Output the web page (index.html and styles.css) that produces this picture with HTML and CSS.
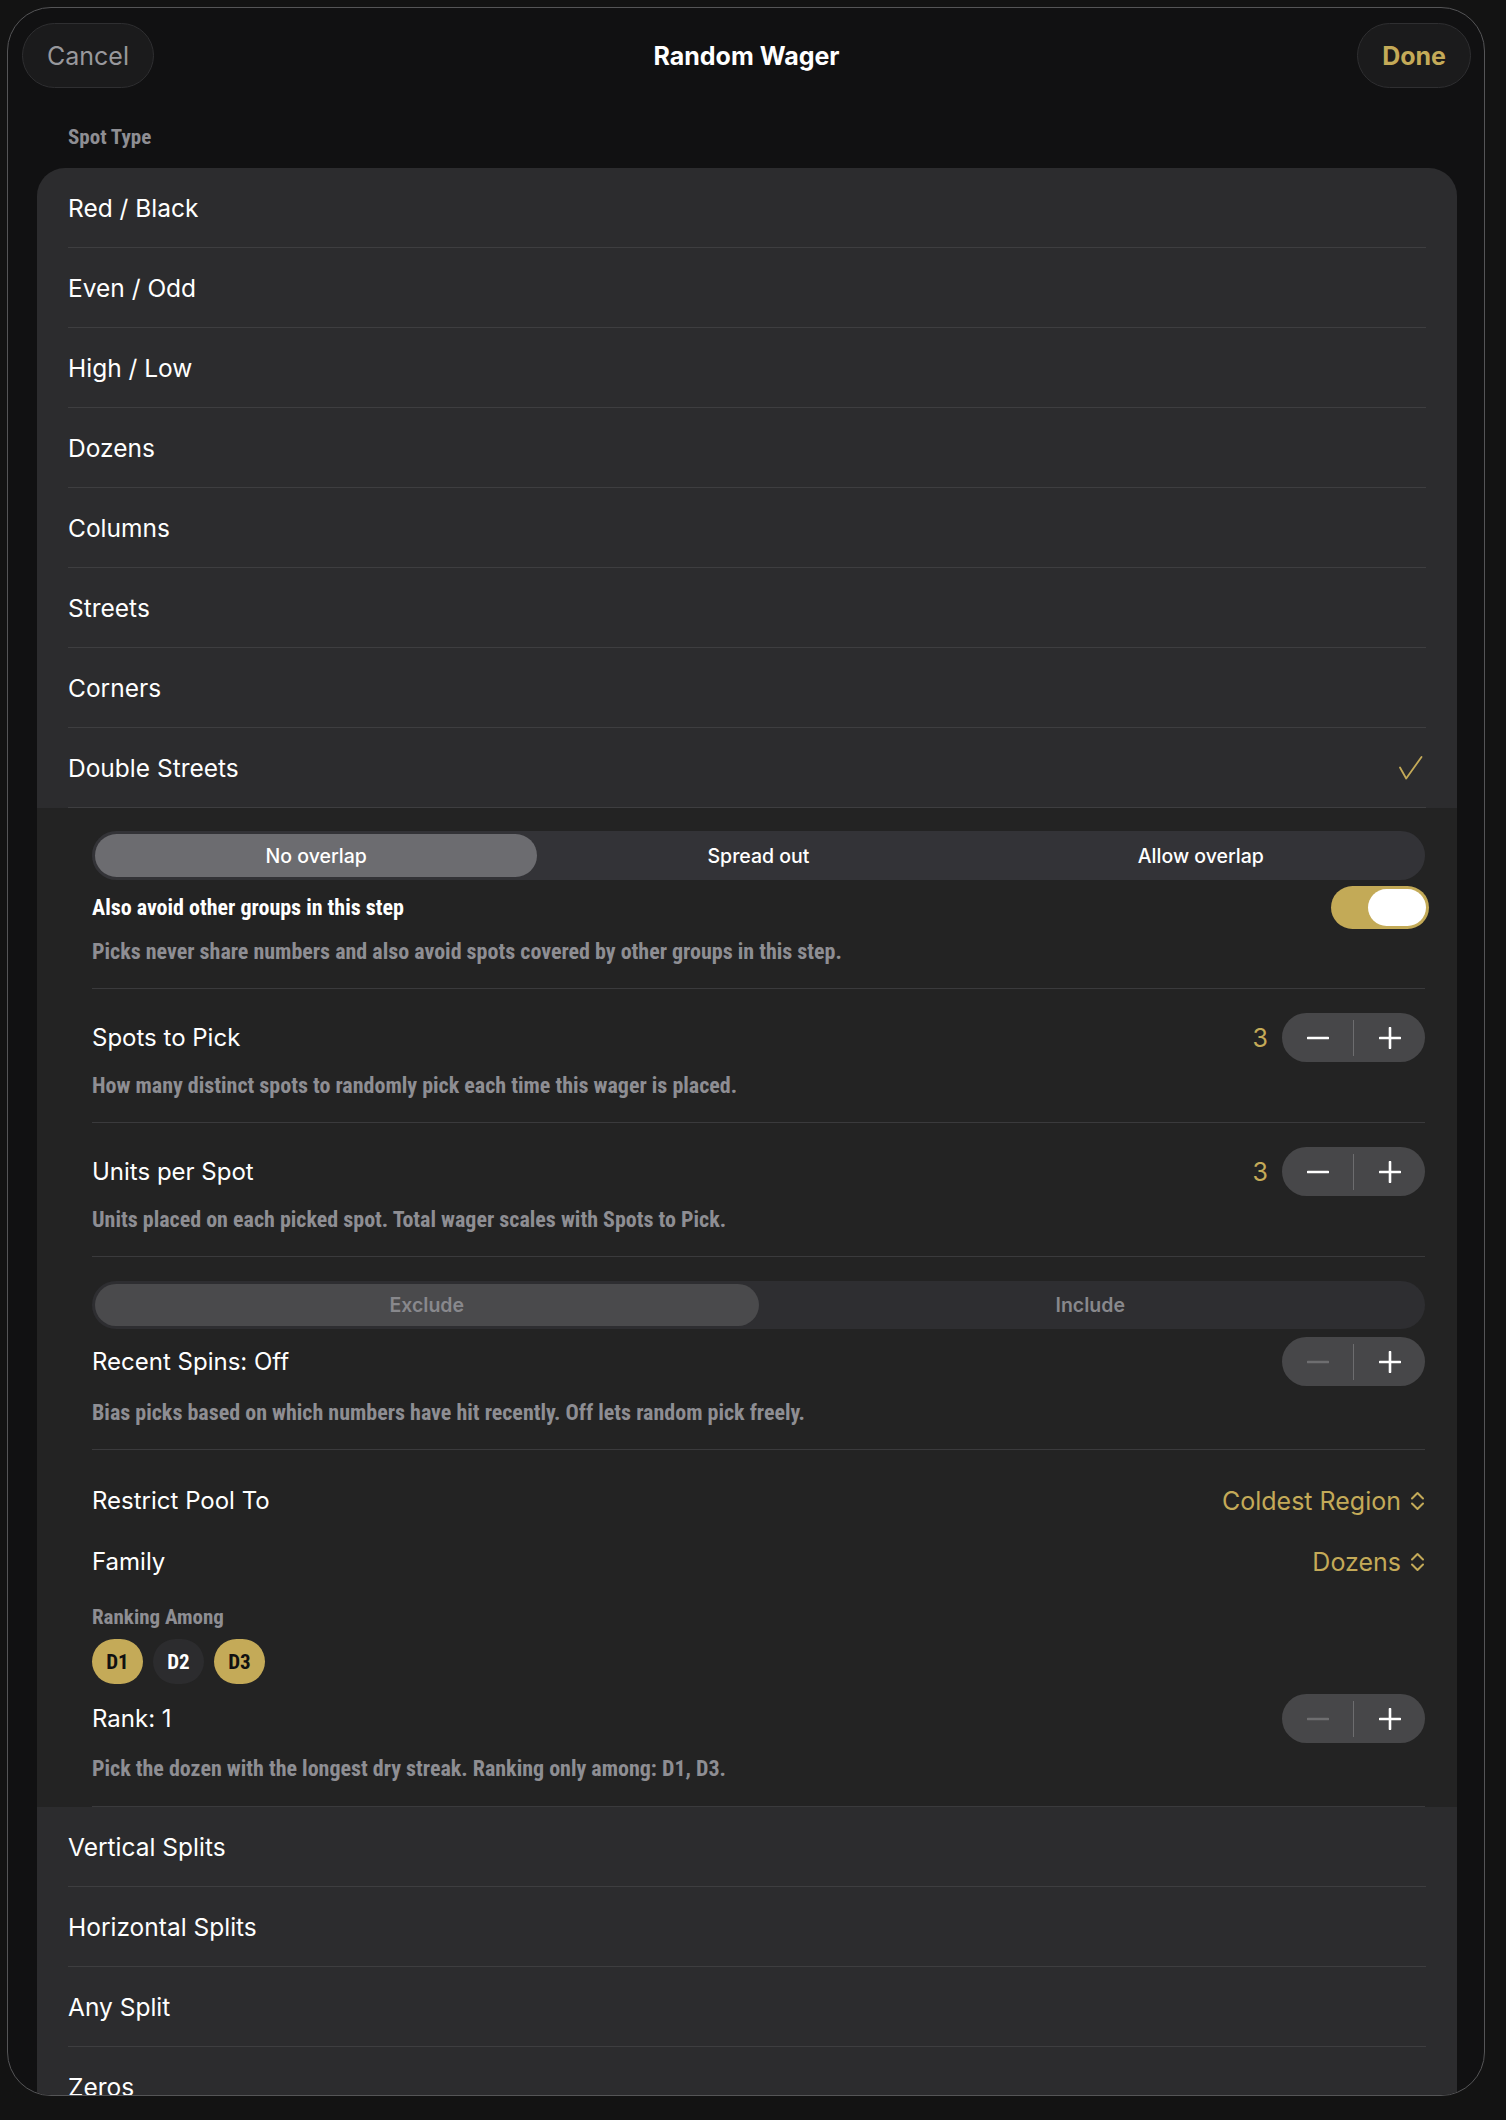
FILE: index.html
```html
<!DOCTYPE html>
<html lang="en">
<head>
  <meta charset="UTF-8">
  <title>Random Wager</title>
  <link rel="stylesheet" href="styles.css">
</head>
<body>
<main class="sheet">
  <header class="sheet-header">
    <button class="pill-btn cancel">Cancel</button>
    <h1 class="title">Random Wager</h1>
    <button class="pill-btn done">Done</button>
  </header>

  <p class="section-label cond">Spot Type</p>

  <section class="card">
    <div class="row">Red / Black</div>
    <div class="row">Even / Odd</div>
    <div class="row">High / Low</div>
    <div class="row">Dozens</div>
    <div class="row">Columns</div>
    <div class="row">Streets</div>
    <div class="row">Corners</div>
    <div class="row">
      <span>Double Streets</span>
      <svg class="check" width="24" height="24" viewBox="0 0 24 24"><path d="M1 11.5 L7.2 22.5 L22.5 1" fill="none" stroke="#c4aa58" stroke-width="1.8" stroke-linecap="round" stroke-linejoin="round"/></svg>
    </div>

    <div class="expanded">
      <div class="block block-first">
        <div class="segmented">
          <span class="seg active">No overlap</span>
          <span class="seg">Spread out</span>
          <span class="seg">Allow overlap</span>
        </div>
        <div class="toggle-row">
          <span class="strong cond">Also avoid other groups in this step</span>
          <span class="toggle"><span class="knob"></span></span>
        </div>
        <p class="desc cond">Picks never share numbers and also avoid spots covered by other groups in this step.</p>
      </div>

      <div class="block">
        <div class="opt-row">
          <span class="opt-label">Spots to Pick</span>
          <div class="stepper-wrap">
            <span class="value">3</span>
            <div class="stepper">
              <span class="step"><svg width="22" height="22" viewBox="0 0 22 22"><path d="M1 11h20" stroke="#fff" stroke-width="2.6" stroke-linecap="round"/></svg></span>
              <span class="divider"></span>
              <span class="step"><svg width="22" height="22" viewBox="0 0 22 22"><path d="M1 11h20M11 1v20" stroke="#fff" stroke-width="2.6" stroke-linecap="round"/></svg></span>
            </div>
          </div>
        </div>
        <p class="desc cond">How many distinct spots to randomly pick each time this wager is placed.</p>
      </div>

      <div class="block">
        <div class="opt-row">
          <span class="opt-label">Units per Spot</span>
          <div class="stepper-wrap">
            <span class="value">3</span>
            <div class="stepper">
              <span class="step"><svg width="22" height="22" viewBox="0 0 22 22"><path d="M1 11h20" stroke="#fff" stroke-width="2.6" stroke-linecap="round"/></svg></span>
              <span class="divider"></span>
              <span class="step"><svg width="22" height="22" viewBox="0 0 22 22"><path d="M1 11h20M11 1v20" stroke="#fff" stroke-width="2.6" stroke-linecap="round"/></svg></span>
            </div>
          </div>
        </div>
        <p class="desc cond">Units placed on each picked spot. Total wager scales with Spots to Pick.</p>
      </div>

      <div class="block">
        <div class="segmented dim">
          <span class="seg active">Exclude</span>
          <span class="seg">Include</span>
        </div>
        <div class="opt-row tight">
          <span class="opt-label">Recent Spins: Off</span>
          <div class="stepper">
            <span class="step"><svg width="22" height="22" viewBox="0 0 22 22"><path d="M1 11h20" stroke="#6e6e70" stroke-width="2.6" stroke-linecap="round"/></svg></span>
            <span class="divider"></span>
            <span class="step"><svg width="22" height="22" viewBox="0 0 22 22"><path d="M1 11h20M11 1v20" stroke="#fff" stroke-width="2.6" stroke-linecap="round"/></svg></span>
          </div>
        </div>
        <p class="desc cond loose">Bias picks based on which numbers have hit recently. Off lets random pick freely.</p>
      </div>

      <div class="block block-pool">
        <div class="opt-row">
          <span class="opt-label">Restrict Pool To</span>
          <span class="picker">Coldest Region
            <svg width="15" height="20" viewBox="0 0 15 20"><path d="M2 7.5 L7.5 2 L13 7.5 M2 12.5 L7.5 18 L13 12.5" fill="none" stroke="#c4aa58" stroke-width="2" stroke-linecap="round" stroke-linejoin="round"/></svg>
          </span>
        </div>
        <div class="opt-row family">
          <span class="opt-label">Family</span>
          <span class="picker">Dozens
            <svg width="15" height="20" viewBox="0 0 15 20"><path d="M2 7.5 L7.5 2 L13 7.5 M2 12.5 L7.5 18 L13 12.5" fill="none" stroke="#c4aa58" stroke-width="2" stroke-linecap="round" stroke-linejoin="round"/></svg>
          </span>
        </div>
        <p class="sub-label cond">Ranking Among</p>
        <div class="chips">
          <span class="chip on cond">D1</span>
          <span class="chip cond">D2</span>
          <span class="chip on cond">D3</span>
        </div>
        <div class="opt-row rank">
          <span class="opt-label">Rank: 1</span>
          <div class="stepper">
            <span class="step"><svg width="22" height="22" viewBox="0 0 22 22"><path d="M1 11h20" stroke="#6e6e70" stroke-width="2.6" stroke-linecap="round"/></svg></span>
            <span class="divider"></span>
            <span class="step"><svg width="22" height="22" viewBox="0 0 22 22"><path d="M1 11h20M11 1v20" stroke="#fff" stroke-width="2.6" stroke-linecap="round"/></svg></span>
          </div>
        </div>
        <p class="desc cond rank-desc">Pick the dozen with the longest dry streak. Ranking only among: D1, D3.</p>
      </div>
    </div>

    <div class="row">Vertical Splits</div>
    <div class="row">Horizontal Splits</div>
    <div class="row">Any Split</div>
    <div class="row">Zeros</div>
  </section>
</main>
</body>
</html>
```

FILE: styles.css
```css
* {
  margin: 0;
  padding: 0;
  box-sizing: border-box;
}

body {
  background: #131313;
  font-family: Inter, "Liberation Sans", sans-serif;
  color: #fff;
  height: 2120px;
  overflow: hidden;
}

.cond {
  font-family: "Roboto Condensed", "Liberation Sans Narrow", "DejaVu Sans Condensed", Roboto, sans-serif;
  font-stretch: condensed;
  font-weight: 700;
}

.sheet {
  margin: 7px 21px 0 7px;
  height: 2089px;
  background: #111112;
  border: 1px solid #555557;
  border-radius: 44px;
  overflow: hidden;
}

/* header */
.sheet-header {
  display: grid;
  grid-template-columns: 1fr auto 1fr;
  align-items: center;
  padding: 15px 13px 0 14px;
}

.pill-btn {
  height: 65px;
  padding: 0 24px;
  border-radius: 33px;
  background: #1b1b1c;
  border: 1px solid #2f2f31;
  font-family: Inter, "Liberation Sans", sans-serif;
  font-size: 25px;
}

.cancel {
  justify-self: start;
  color: #98989c;
}

.done {
  justify-self: end;
  color: #c4aa58;
  font-weight: 700;
}

.title {
  font-size: 25px;
  font-weight: 700;
}

.section-label {
  margin: 37px 0 0 60px;
  font-size: 21px;
  line-height: 24px;
  color: #8e8e93;
}

/* list card */
.card {
  margin: 19px 27px 0 29px;
  background: #2c2c2e;
  border-radius: 28px 28px 0 0;
}

.row {
  margin: 0 31px;
  height: 80px;
  border-bottom: 1px solid #3e3e40;
  display: flex;
  align-items: center;
  justify-content: space-between;
  font-size: 24.5px;
}

.check {
  margin-right: 3px;
}

/* expanded options */
.expanded {
  background: #232323;
  padding: 0 32px 0 55px;
}

.block {
  padding: 24px 0;
  border-bottom: 1px solid #3a3a3c;
}

.block-first {
  padding-top: 23px;
}

.segmented {
  display: flex;
  height: 49px;
  padding: 3px;
  background: #333337;
  border-radius: 25px;
}

.seg {
  flex: 1;
  display: flex;
  align-items: center;
  justify-content: center;
  border-radius: 22px;
  font-size: 19.5px;
  font-weight: 500;
}

.seg.active {
  background: #6c6c70;
}

.segmented.dim {
  height: 48px;
  background: #2e2e31;
}

.segmented.dim .seg {
  color: #88888c;
  font-weight: 600;
}

.segmented.dim .seg.active {
  background: #4a4a4c;
}

.toggle-row {
  margin-top: 6px;
  height: 43px;
  display: flex;
  align-items: center;
  justify-content: space-between;
}

.strong {
  font-size: 22px;
}

.toggle {
  width: 98px;
  height: 43px;
  margin-right: -4px;
  padding: 3px;
  border-radius: 22px;
  background: #c3aa57;
  display: flex;
  justify-content: flex-end;
}

.knob {
  width: 58px;
  height: 37px;
  border-radius: 19px;
  background: #fff;
}

.desc {
  margin-top: 11px;
  font-size: 22px;
  line-height: 24px;
  color: #8e8e93;
}

.opt-row + .desc {
  margin-top: 12px;
}

.opt-row + .desc.loose {
  margin-top: 15px;
}

.opt-row + .desc.rank-desc {
  margin-top: 14px;
}

.opt-row {
  height: 49px;
  display: flex;
  align-items: center;
  justify-content: space-between;
}

.opt-row.tight {
  margin-top: 8px;
}

.opt-label {
  font-size: 24px;
}

.stepper-wrap {
  display: flex;
  align-items: center;
}

.value {
  margin-right: 14px;
  font-size: 25px;
  color: #c4aa58;
}

.stepper {
  width: 143px;
  height: 49px;
  border-radius: 25px;
  background: #474749;
  display: flex;
  align-items: center;
}

.step {
  flex: 1;
  height: 100%;
  display: flex;
  align-items: center;
  justify-content: center;
}

.divider {
  width: 1px;
  height: 36px;
  background: #6d6d6f;
}

.block-pool {
  padding: 26px 0 25px;
}

.picker {
  display: flex;
  align-items: center;
  gap: 9px;
  font-size: 25px;
  color: #c4aa58;
}

.opt-row.family {
  margin-top: 12px;
}

.sub-label {
  margin-top: 19px;
  font-size: 21px;
  line-height: 24px;
  color: #8e8e93;
}

.chips {
  margin-top: 10px;
  display: flex;
  gap: 10px;
}

.chip {
  width: 51px;
  height: 45px;
  border-radius: 23px;
  background: #2c2c2e;
  color: #fff;
  display: flex;
  align-items: center;
  justify-content: center;
  font-size: 21px;
}

.chip.on {
  background: #c4aa58;
  color: #111;
}

.opt-row.rank {
  margin-top: 10px;
}
```
